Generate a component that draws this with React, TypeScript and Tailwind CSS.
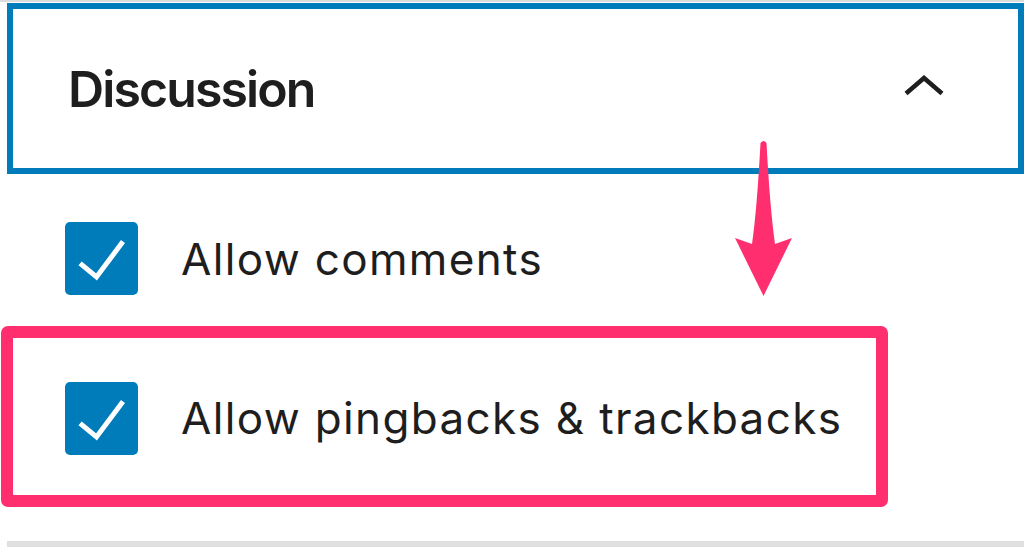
import React from "react";

function CheckIcon() {
  return (
    <svg width="73" height="73" viewBox="0 0 73 73" className="block">
      <rect x="0" y="0" width="73" height="73" rx="5" fill="#007cba" />
      <polyline
        points="17,43 31.5,55 56.5,21.5"
        fill="none"
        stroke="#ffffff"
        strokeWidth="5"
        strokeLinecap="square"
      />
    </svg>
  );
}

function Option({ label }: { label: string }) {
  return (
    <div className="flex items-center gap-[43px]">
      <CheckIcon />
      <span className="text-[44px] leading-none tracking-[1.35px] text-[#1e1e1e]">{label}</span>
    </div>
  );
}

export default function App() {
  return (
    <div
      className="relative w-[1024px] h-[547px] overflow-hidden bg-white"
      style={{ fontFamily: "Inter, 'Noto Sans', sans-serif" }}
    >
      <div className="h-[2px] bg-[#dcdcdc]" />

      {/* Panel header */}
      <div className="mt-px ml-[7px] h-[171px] border-[6px] border-[#007cba] flex items-center justify-between pl-[55px] pr-[74px]">
        <h2 className="text-[50px] font-semibold leading-none tracking-[-1.9px] text-[#1e1e1e]">Discussion</h2>
        <svg width="40" height="22" viewBox="0 0 40 22" className="block -mt-[8px]">
          <polyline
            points="2,19.5 20,4 38,19.5"
            fill="none"
            stroke="#1e1e1e"
            strokeWidth="4.5"
          />
        </svg>
      </div>

      {/* Panel body */}
      <div className="pl-[65px] mt-[48px]">
        <Option label="Allow comments" />
      </div>
      <div className="mt-[31px] ml-px w-[887px] h-[181px] border-[12px] border-[#ff2e6e] rounded-[7px] flex items-center pl-[52px] pt-[3px]">
        <Option label="Allow pingbacks & trackbacks" />
      </div>

      <div className="mt-[34px] ml-[7px] h-[6px] bg-[#e0e0e0]" />

      {/* Pointer arrow */}
      <svg
        width="58"
        height="158"
        viewBox="0 0 58 158"
        className="absolute left-[735px] top-[139px]"
      >
        <path
          d="M25.5 4 Q28.5 0 31.5 4 Q35 70 40 105 L57 99 L28.5 157 L0 99 L17 105 Q22 70 25.5 4 Z"
          fill="#ff2e6e"
        />
      </svg>
    </div>
  );
}
